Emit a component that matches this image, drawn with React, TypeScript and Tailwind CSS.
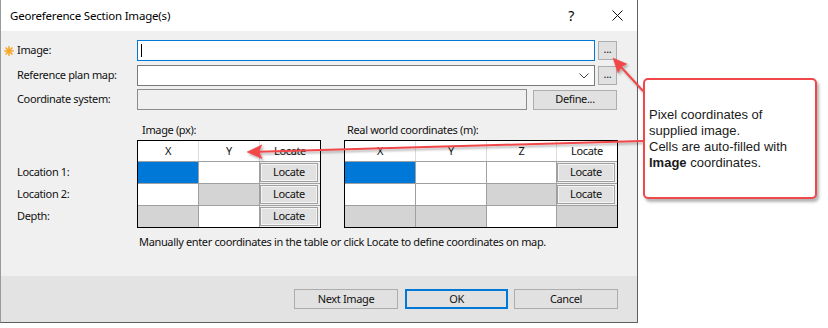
import React from "react";

const UI = "font-['Noto_Sans',sans-serif] text-[11px] tracking-[-0.35px] text-[#111]";

type Cell = "blue" | "white" | "gray" | "locate";

const IMAGE_ROWS: Cell[][] = [
  ["blue", "white", "locate"],
  ["white", "gray", "locate"],
  ["gray", "white", "locate"],
];

const WORLD_ROWS: Cell[][] = [
  ["blue", "white", "white", "locate"],
  ["white", "white", "gray", "locate"],
  ["gray", "gray", "white", "gray"],
];

function WinButton({ children, className = "" }: { children: React.ReactNode; className?: string }) {
  return (
    <div
      className={`flex items-center justify-center border border-[#adadad] bg-[#e1e1e1] ${className}`}
    >
      {children}
    </div>
  );
}

function GridCell({ kind }: { kind: Cell }) {
  if (kind === "locate") {
    return (
      <div className="bg-[#f0f0f0] py-px pr-[2px]">
        <div className="flex h-full items-center justify-center border border-[#a0a0a0] bg-[#e1e1e1] shadow-[inset_0_0_0_1px_#f4f4f4]">
          Locate
        </div>
      </div>
    );
  }
  const bg = kind === "blue" ? "bg-[#0078d7]" : kind === "gray" ? "bg-[#d4d4d4]" : "bg-white";
  return <div className={bg} />;
}

function CoordTable({ cols, headers, rows }: { cols: string; headers: string[]; rows: Cell[][] }) {
  return (
    <div className="flex flex-col border border-black">
      <div className={`grid h-[20px] gap-x-px bg-[#dcdcdc] ${cols}`}>
        {headers.map((h, i) => (
          <div key={i} className="flex items-center justify-center bg-white">
            {h}
          </div>
        ))}
      </div>
      <div className={`grid grid-rows-[21px_21px_21px] gap-px bg-[#a0a0a0] pt-px ${cols}`}>
        {rows.flat().map((c, i) => (
          <GridCell key={i} kind={c} />
        ))}
      </div>
    </div>
  );
}

function Star() {
  return (
    <svg width="10" height="10" viewBox="0 0 10 10" className="text-[#f5a623]">
      <g stroke="currentColor" strokeWidth="1.6" strokeLinecap="round">
        <line x1="5" y1="0.8" x2="5" y2="9.2" />
        <line x1="0.8" y1="5" x2="9.2" y2="5" />
        <line x1="2" y1="2" x2="8" y2="8" />
        <line x1="8" y1="2" x2="2" y2="8" />
      </g>
    </svg>
  );
}

export default function App() {
  return (
    <div className={`relative h-[328px] w-[828px] overflow-hidden bg-white ${UI}`}>
      {/* Dialog */}
      <div className="flex h-[323px] w-[638px] flex-col border-x border-b border-l-[#9a9a9a] border-r-[#5f5f5f] border-b-[#5f5f5f]">
        {/* Title bar */}
        <div className="flex h-[31px] shrink-0 items-center bg-white pl-[9px] pr-[10px]">
          <span className="text-[11.5px] tracking-[-0.2px] text-black">Georeference Section Image(s)</span>
          <span className="ml-auto flex w-[20px] justify-center text-[14px] text-black">?</span>
          <span className="ml-[26px] flex w-[20px] justify-center">
            <svg width="11" height="11" viewBox="0 0 11 11">
              <path d="M0.5 0.5 L10.5 10.5 M10.5 0.5 L0.5 10.5" stroke="#111" strokeWidth="1" />
            </svg>
          </span>
        </div>

        {/* Body */}
        <div className="flex flex-1 flex-col bg-[#f0f0f0] pt-[9px]">
          {/* Image */}
          <div className="flex h-[21px] items-center">
            <div className="flex w-[16px] justify-center">
              <Star />
            </div>
            <div className="w-[120px]">Image:</div>
            <div className="flex h-[21px] w-[458px] items-center border border-[#0078d7] bg-white pl-[3px]">
              <div className="h-[13px] w-px bg-black" />
            </div>
            <WinButton className="ml-[3px] h-[19px] w-[19px] pb-[3px]">...</WinButton>
          </div>

          {/* Reference plan map */}
          <div className="mt-[4px] flex h-[21px] items-center">
            <div className="w-[16px]" />
            <div className="w-[120px]">Reference plan map:</div>
            <div className="flex h-[21px] w-[458px] items-center justify-end border border-[#7a7a7a] bg-white pr-[5px]">
              <svg width="10" height="6" viewBox="0 0 10 6">
                <path d="M0.5 0.5 L5 5 L9.5 0.5" fill="none" stroke="#444" strokeWidth="1" />
              </svg>
            </div>
            <WinButton className="ml-[3px] h-[19px] w-[19px] pb-[3px]">...</WinButton>
          </div>

          {/* Coordinate system */}
          <div className="mt-[3px] flex h-[21px] items-center">
            <div className="w-[16px]" />
            <div className="w-[120px]">Coordinate system:</div>
            <div className="h-[21px] w-[390px] border border-[#8c8c8c] bg-[#f0f0f0]" />
            <WinButton className="ml-[6px] h-[20px] w-[84px]">Define...</WinButton>
          </div>

          {/* Coordinates tables */}
          <div className="mt-[12px] flex">
            <div className="flex w-[136px] flex-col pl-[16px] pt-[39px]">
              <div className="flex h-[22px] items-center">Location 1:</div>
              <div className="flex h-[22px] items-center">Location 2:</div>
              <div className="flex h-[22px] items-center">Depth:</div>
            </div>
            <div className="flex w-[184px] flex-col">
              <div className="mb-[2px] h-[16px] pl-[5px] leading-[16px]">Image (px):</div>
              <CoordTable
                cols="grid-cols-[60px_60px_60px]"
                headers={["X", "Y", "Locate"]}
                rows={IMAGE_ROWS}
              />
            </div>
            <div className="ml-[23px] flex w-[274px] flex-col">
              <div className="mb-[2px] h-[16px] pl-[3px] leading-[16px]">Real world coordinates (m):</div>
              <CoordTable
                cols="grid-cols-[70px_70px_69px_60px]"
                headers={["X", "Y", "Z", "Locate"]}
                rows={WORLD_ROWS}
              />
            </div>
          </div>

          <div className="mt-[6px] h-[16px] pl-[138px] leading-[16px]">
            Manually enter coordinates in the table or click Locate to define coordinates on map.
          </div>
        </div>

        {/* Footer */}
        <div className="flex h-[46px] shrink-0 items-start justify-end bg-[#e3e3e3] pr-[19px] pt-[13px]">
          <WinButton className="h-[20px] w-[104px]">Next Image</WinButton>
          <div className="ml-[7px] flex h-[20px] w-[103px] items-center justify-center border-2 border-[#0078d7] bg-[#e1e1e1]">
            OK
          </div>
          <WinButton className="ml-[6px] h-[20px] w-[104px]">Cancel</WinButton>
        </div>
      </div>

      {/* Callout arrows */}
      <svg className="pointer-events-none absolute left-0 top-0" width="828" height="328">
        <defs>
          <filter id="sh" x="-20%" y="-50%" width="140%" height="200%">
            <feDropShadow dx="1.5" dy="2" stdDeviation="1.2" floodColor="#000" floodOpacity="0.3" />
          </filter>
        </defs>
        <g filter="url(#sh)" fill="#f0474a" stroke="#f0474a">
          <line x1="643" y1="91" x2="621" y2="67" strokeWidth="2" />
          <polygon points="613,58 627,64 621.5,66.5 618,73" strokeWidth="0.5" />
          <line x1="643" y1="141" x2="259" y2="151.7" strokeWidth="2" />
          <polygon points="247,152 262,144.8 259,151.6 262,158.6" strokeWidth="0.5" />
        </g>
      </svg>

      {/* Callout box */}
      <div className="absolute left-[643px] top-[78px] flex h-[121px] w-[174px] flex-col justify-center rounded-[5px] border-2 border-[#f0474a] bg-white pl-[4px] font-['Liberation_Sans',Arial,sans-serif] text-[13px] leading-[16px] tracking-normal text-[#1a1a1a] shadow-[2px_3px_3px_rgba(0,0,0,0.3)]">
        <div>Pixel coordinates of</div>
        <div>supplied image.</div>
        <div>Cells are auto-filled with</div>
        <div>
          <b>Image</b> coordinates.
        </div>
      </div>
    </div>
  );
}
